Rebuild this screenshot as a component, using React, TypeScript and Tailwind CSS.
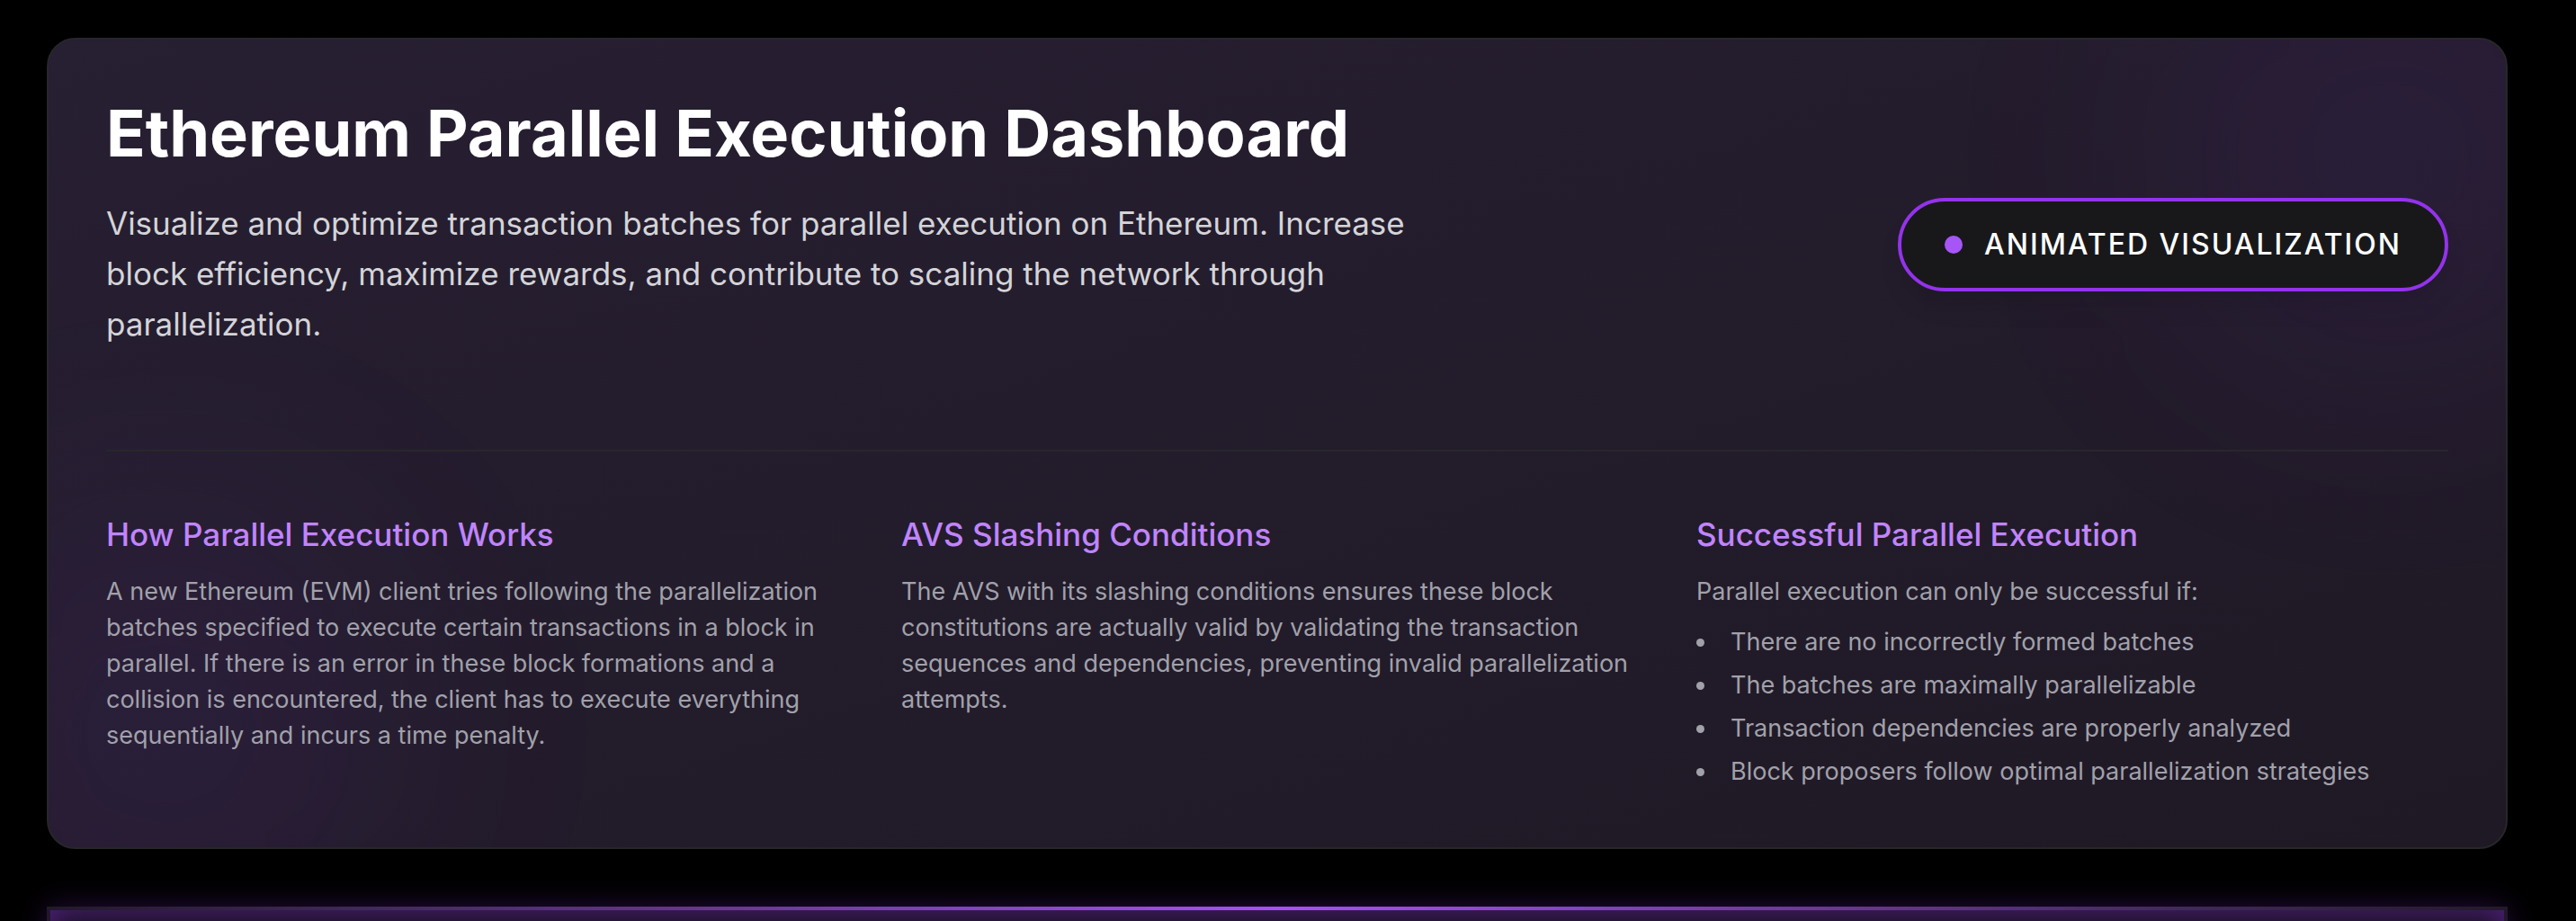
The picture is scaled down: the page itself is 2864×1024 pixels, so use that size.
const conditions = [
  "There are no incorrectly formed batches",
  "The batches are maximally parallelizable",
  "Transaction dependencies are properly analyzed",
  "Block proposers follow optimal parallelization strategies",
];

export default function App() {
  return (
    <div className="h-screen overflow-hidden bg-black pt-[42px] pr-[76px] pl-[52px] font-['Inter',sans-serif]">
      <header className="relative overflow-hidden rounded-[32px] border-2 border-[#27272a] bg-linear-to-br from-[#271f32] to-[#1f1925] p-16">
        <div className="absolute -top-32 -right-32 size-[512px] rounded-full bg-[#9333ea]/7 blur-[128px]" />
        <div className="absolute -bottom-32 -left-32 size-[512px] rounded-full bg-[#9333ea]/7 blur-[128px]" />
        <div className="relative flex items-center justify-between pb-16">
          <div className="pb-12">
            <h1 className="mb-8 text-[72px] leading-[80px] font-bold text-white">
              Ethereum Parallel Execution Dashboard
            </h1>
            <p className="max-w-[1500px] text-[35px] leading-[56px] text-[#d4d4d8]">
              Visualize and optimize transaction batches for parallel execution on Ethereum. Increase
              block efficiency, maximize rewards, and contribute to scaling the network through
              parallelization.
            </p>
          </div>
          <button
            type="button"
            className="flex h-[104px] shrink-0 items-center gap-6 rounded-full border-4 border-[#9333ea] bg-[#18181b] px-12 text-[32px] leading-[48px] font-medium tracking-[2px] text-white shadow-[0_20px_30px_-6px_rgba(0,0,0,0.1)]"
          >
            <span className="size-5 rounded-full bg-[#a855f7]" />
            ANIMATED VISUALIZATION
          </button>
        </div>
        <div className="relative grid grid-cols-3 gap-12 border-t-2 border-[#27272a] pt-16 text-[27px] leading-[40px] text-[#a1a1aa]">
          <section>
            <h2 className="mb-4 text-[35px] leading-[56px] font-medium text-[#c084fc]">
              How Parallel Execution Works
            </h2>
            <p>
              A new Ethereum (EVM) client tries following the parallelization batches specified to
              execute certain transactions in a block in parallel. If there is an error in these
              block formations and a collision is encountered, the client has to execute everything
              sequentially and incurs a time penalty.
            </p>
          </section>
          <section>
            <h2 className="mb-4 text-[35px] leading-[56px] font-medium text-[#c084fc]">
              AVS Slashing Conditions
            </h2>
            <p>
              The AVS with its slashing conditions ensures these block constitutions are actually
              valid by validating the transaction sequences and dependencies, preventing invalid
              parallelization attempts.
            </p>
          </section>
          <section>
            <h2 className="mb-4 text-[35px] leading-[56px] font-medium text-[#c084fc]">
              Successful Parallel Execution
            </h2>
            <p>Parallel execution can only be successful if:</p>
            <ul className="mt-4 space-y-2">
              {conditions.map((text) => (
                <li key={text} className="flex items-center gap-[29px]">
                  <span className="size-[9px] shrink-0 rounded-full bg-[#a1a1aa]" />
                  {text}
                </li>
              ))}
            </ul>
          </section>
        </div>
      </header>
      <main className="mt-16 bg-[#1c1226] shadow-[0_0_30px_rgba(147,51,234,0.25)]">
        <div className="h-1 bg-linear-to-r from-[#221a2b] via-[#a84ff5] to-[#221a2b]" />
        <div className="h-[640px] border-x-4 border-[#22182d] shadow-[inset_0_0_32px_rgba(147,51,234,0.45)]" />
      </main>
    </div>
  );
}
